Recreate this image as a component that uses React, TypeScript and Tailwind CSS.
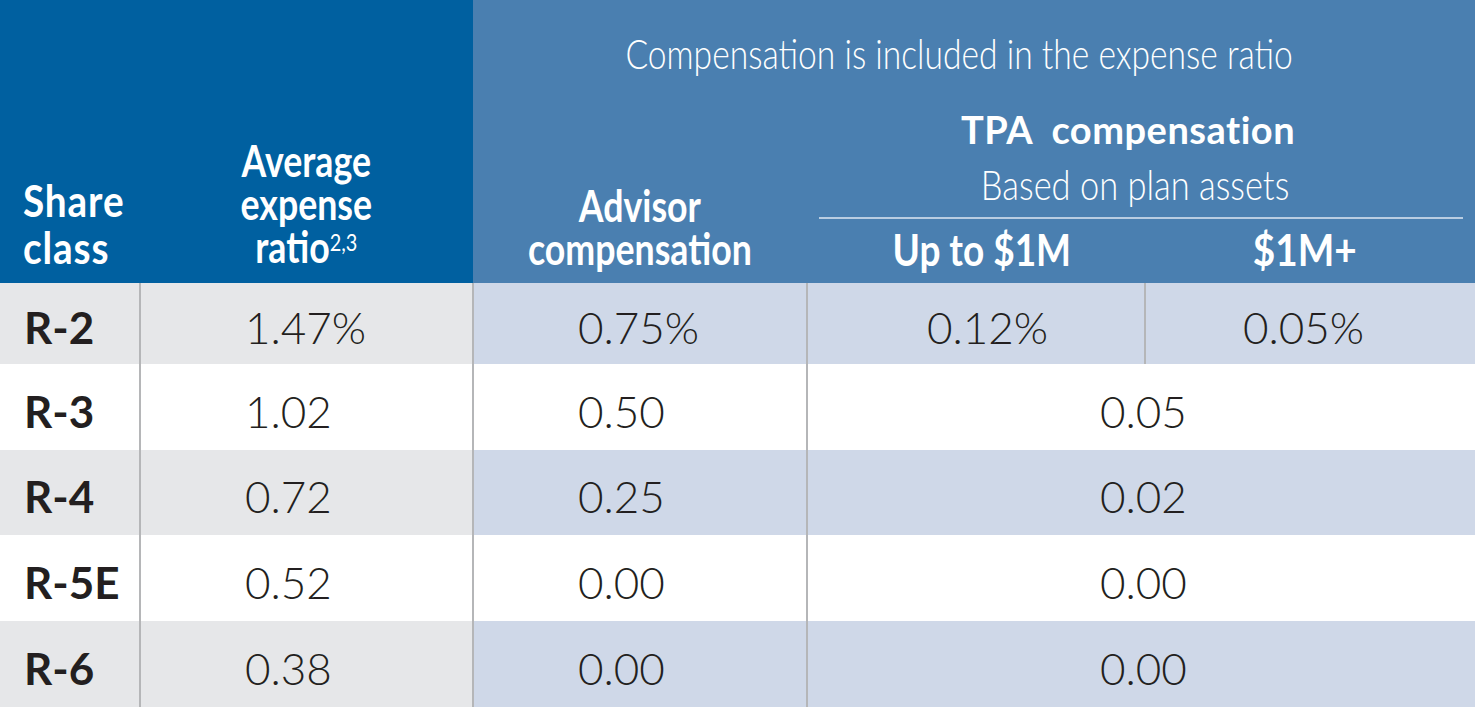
import React from "react";

const lato = "font-['Lato','Liberation_Sans',sans-serif]";

type Row = {
  cls: string;
  avg: string;
  adv: string;
  tpa?: string;
  tpa1?: string;
  tpa2?: string;
  shaded: boolean;
  h: string;
};

const rows: Row[] = [
  { cls: "R-2", avg: "1.47%", adv: "0.75%", tpa1: "0.12%", tpa2: "0.05%", shaded: true, h: "h-[81px]" },
  { cls: "R-3", avg: "1.02", adv: "0.50", tpa: "0.05", shaded: false, h: "h-[86px]" },
  { cls: "R-4", avg: "0.72", adv: "0.25", tpa: "0.02", shaded: true, h: "h-[85px]" },
  { cls: "R-5E", avg: "0.52", adv: "0.00", tpa: "0.00", shaded: false, h: "h-[86px]" },
  { cls: "R-6", avg: "0.38", adv: "0.00", tpa: "0.00", shaded: true, h: "h-[86px]" },
];

export default function App() {
  return (
    <div className={`w-[1475px] h-[707px] overflow-hidden bg-white text-[#231f20] ${lato}`}>
      {/* Header */}
      <div className="flex h-[283px] text-white">
        <div className="flex w-[473px] items-end bg-[#0060a0]">
          <div className="w-[139px] pl-[23px] pb-[12px] text-[43px] font-bold leading-[47px]">
            <span className="inline-block origin-left scale-x-[0.9] whitespace-nowrap tracking-[1px]">
              Share
              <br />
              class
            </span>
          </div>
          <div className="flex-1 pb-[15px] text-center text-[43px] font-bold leading-[43px]">
            <span className="inline-block scale-x-[0.83] whitespace-nowrap">
              Average
              <br />
              expense
              <br />
              ratio<sup className="text-[24px] font-normal leading-none">2,3</sup>
            </span>
          </div>
        </div>
        <div className="flex flex-1 flex-col bg-[#4a7fb0]">
          <div className="pt-[31px] pr-[30px] text-center text-[42px] font-light leading-[44px]">
            <span className="inline-block scale-x-[0.8] whitespace-nowrap">
              Compensation is included in the expense ratio
            </span>
          </div>
          <div className="flex flex-1">
            <div className="flex w-[334px] items-end justify-center pb-[13px] text-center text-[43px] font-bold leading-[43px]">
              <span className="inline-block scale-x-[0.83] whitespace-nowrap">
                Advisor
                <br />
                compensation
              </span>
            </div>
            <div className="flex flex-1 flex-col">
              <div className="pt-[32px] pr-[26px] text-center text-[38px] font-bold leading-[44px] tracking-[0.5px]">
                TPA&nbsp; compensation
              </div>
              <div className="mt-[11px] pr-[12px] text-center text-[42px] font-light leading-[44px]">
                <span className="inline-block scale-x-[0.82] whitespace-nowrap">Based on plan assets</span>
              </div>
              <div className="mx-[12px] mt-[11px] h-[2px] bg-[#b9cde2]" />
              <div className="flex flex-1 items-end pb-[12px] text-[43px] font-bold leading-[43px]">
                <div className="w-[338px] pl-[12px] text-center">
                  <span className="inline-block scale-x-[0.86] whitespace-nowrap">Up to $1M</span>
                </div>
                <div className="flex-1 pr-[10px] text-center">
                  <span className="inline-block scale-x-[0.9] whitespace-nowrap">$1M+</span>
                </div>
              </div>
            </div>
          </div>
        </div>
      </div>

      {/* Body rows */}
      {rows.map((r) => {
        const left = r.shaded ? "bg-[#e6e7e9]" : "bg-white";
        const right = r.shaded ? "bg-[#cfd8e8]" : "bg-white";
        return (
          <div key={r.cls} className={`flex ${r.h} text-[44px] font-light leading-none`}>
            <div className={`${left} flex w-[141px] items-center border-r-2 border-[#b5b6b8] pl-[24px] pt-[7px] font-bold`}>
              {r.cls}
            </div>
            <div className={`${left} flex w-[333px] items-center border-r-2 border-[#b5b6b8] pl-[104px] pt-[7px]`}>
              {r.avg}
            </div>
            <div className={`${right} flex w-[334px] items-center border-r-2 border-[#b5b6b8] pl-[104px] pt-[7px]`}>
              {r.adv}
            </div>
            {r.tpa1 ? (
              <>
                <div className={`${right} flex w-[338px] items-center border-r-2 border-[#b5b6b8] pl-[119px] pt-[7px]`}>
                  {r.tpa1}
                </div>
                <div className={`${right} flex flex-1 items-center pl-[97px] pt-[7px]`}>{r.tpa2}</div>
              </>
            ) : (
              <div className={`${right} flex flex-1 items-center pl-[292px] pt-[7px]`}>{r.tpa}</div>
            )}
          </div>
        );
      })}
    </div>
  );
}
